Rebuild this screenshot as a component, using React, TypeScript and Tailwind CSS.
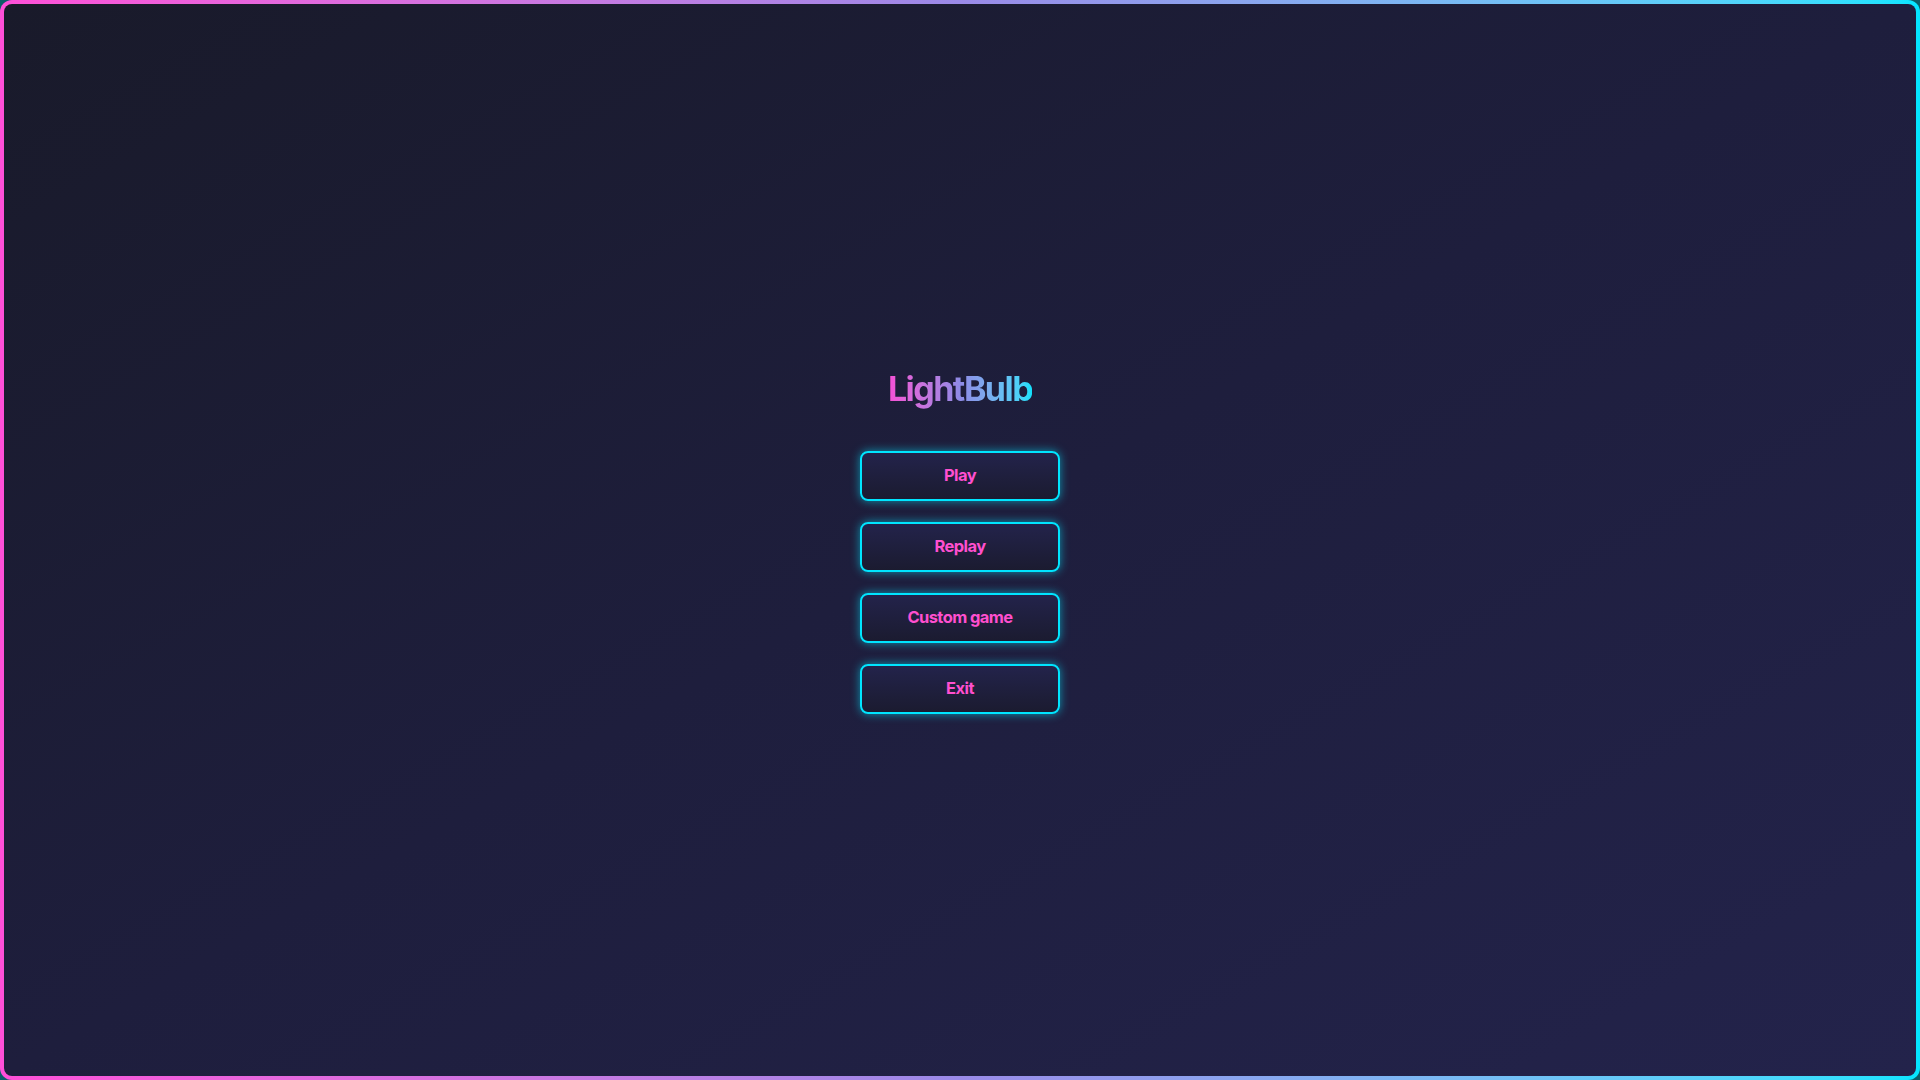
import React from "react";

export default function App() {
  const items = ["Play", "Replay", "Custom game", "Exit"];
  return (
    <div className="w-screen h-screen bg-[#0c5d68]" style={{ fontFamily: "Inter, 'Noto Sans', sans-serif" }}>
      <div className="w-full h-full p-1 rounded-[12px] bg-gradient-to-r from-[#ff4fd8] via-[#9a8ae8] to-[#00e5ff]">
        <div className="w-full h-full rounded-[8px] bg-gradient-to-br from-[#191a2a] via-[#1e1e3d] to-[#23234b] flex flex-col items-center justify-center">
          <h1 className="text-[34px] leading-[44px] font-bold tracking-[-0.045em] bg-gradient-to-r from-[#f54fd6] via-[#8e8ae6] to-[#0be0fb] bg-clip-text text-transparent">
            LightBulb
          </h1>
          <div className="mt-[40px] flex flex-col gap-[21px]">
            {items.map((t) => (
              <button
                key={t}
                className="w-[200px] h-[50px] rounded-[8px] border-2 border-[#00e5ff] bg-gradient-to-b from-[#23234b] to-[#1b1b30] text-[#ff4fcf] text-[16.5px] font-bold tracking-[-0.035em] shadow-[0_0_10px_rgba(0,229,255,0.6)]"
              >
                {t}
              </button>
            ))}
          </div>
        </div>
      </div>
    </div>
  );
}
